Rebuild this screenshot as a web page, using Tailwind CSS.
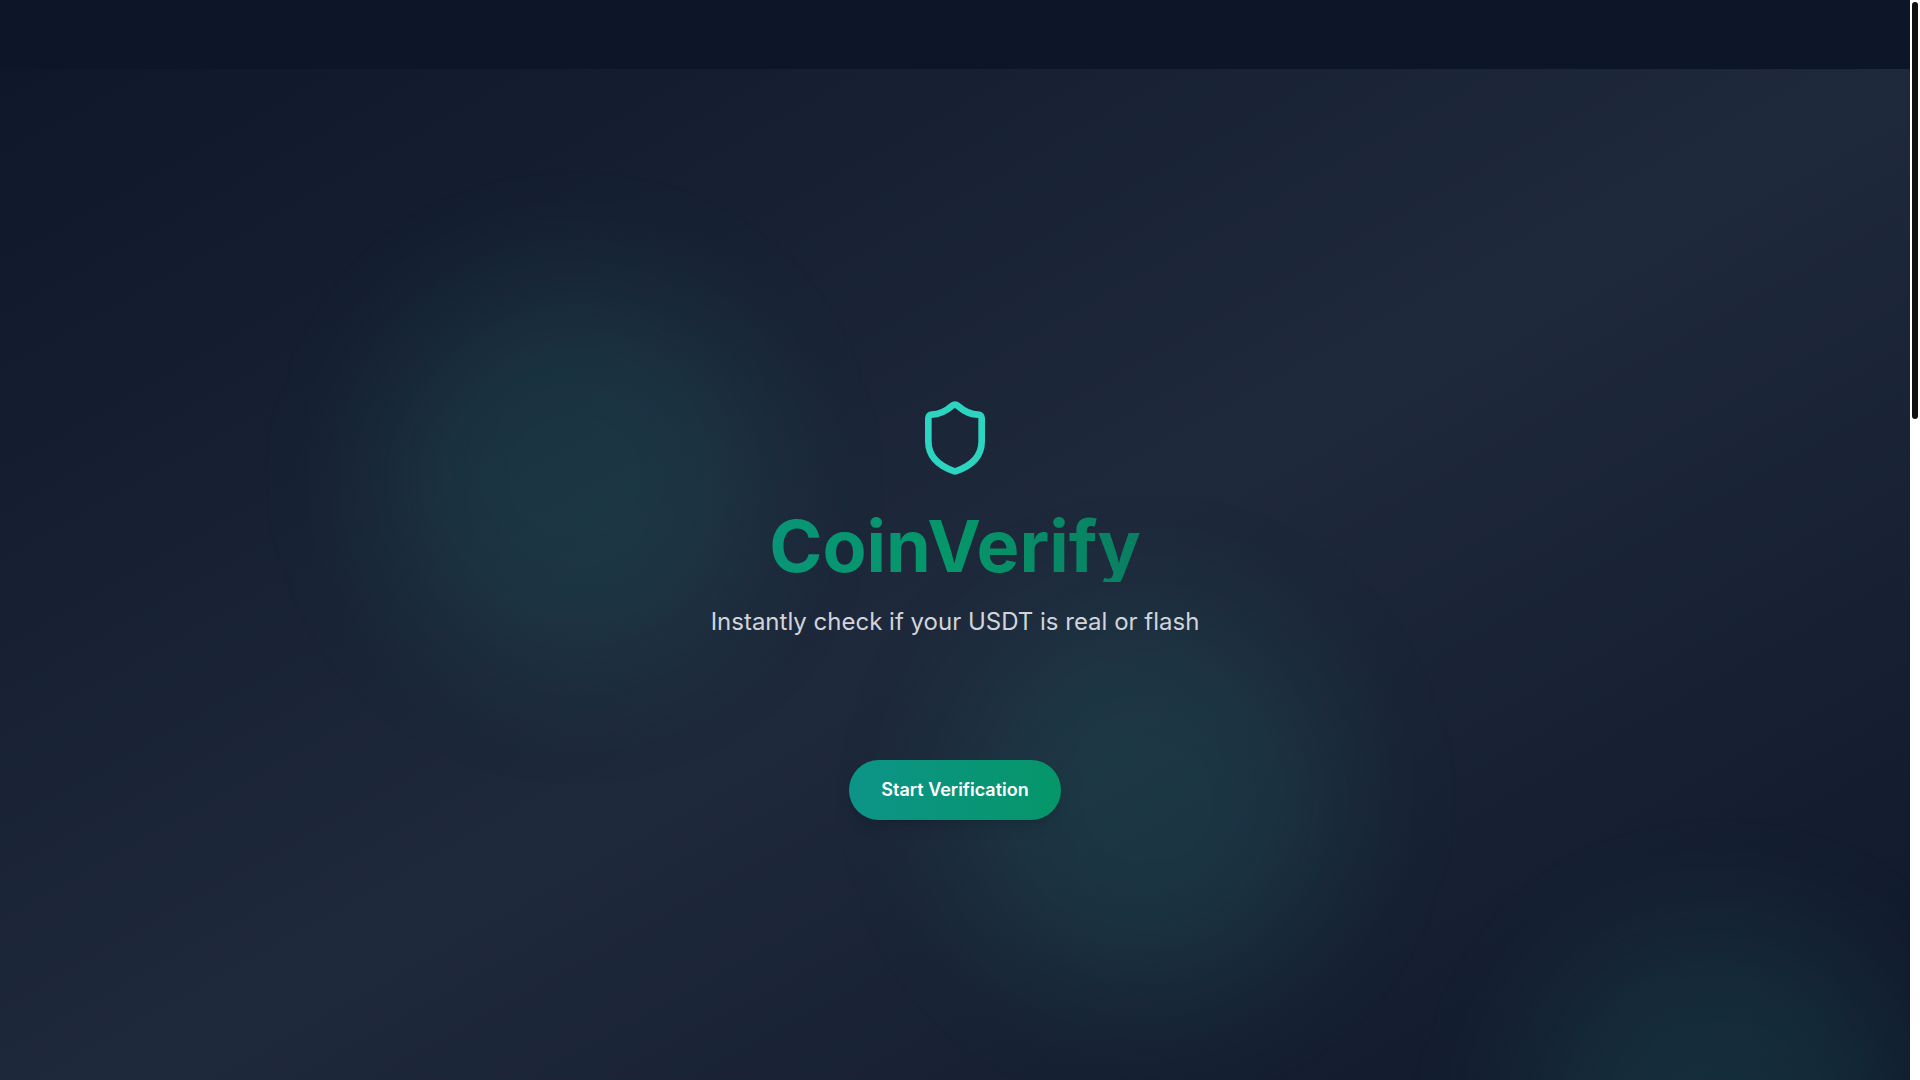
<!DOCTYPE html>
<html lang="en">
  <head>
    <meta charset="UTF-8" />
    <meta name="viewport" content="width=device-width, initial-scale=1.0" />
    <title>CoinVerify</title>
    <script src="https://cdn.jsdelivr.net/npm/@tailwindcss/browser@4"></script>
  </head>
  <body class="flex h-screen overflow-hidden bg-[#0f172a] font-['Inter',sans-serif] text-white">
    <div class="flex h-screen min-w-0 flex-1 flex-col overflow-hidden">
      <!-- Top bar -->
      <header class="h-[69px] shrink-0 bg-[#0d1628]"></header>

      <!-- Hero -->
      <main class="relative flex min-h-screen shrink-0 flex-col items-center justify-center overflow-hidden bg-linear-to-br/srgb from-[#0f172a] via-[#1e293b] to-[#0f172a]">
        <!-- Background glows -->
        <div class="absolute top-[20%] left-[20%] size-96 rounded-full bg-[#2dd4bf]/10 blur-3xl"></div>
        <div class="absolute top-[50%] left-[50%] size-96 rounded-full bg-[#2dd4bf]/10 blur-3xl"></div>
        <div class="absolute top-[80%] left-[80%] size-96 rounded-full bg-[#2dd4bf]/10 blur-3xl"></div>

        <section class="relative flex w-full max-w-4xl flex-col items-center px-4 text-center">
          <svg class="mb-8 size-20 text-[#2dd4bf]" viewBox="0 0 24 24" fill="none" stroke="currentColor" stroke-width="2" stroke-linecap="round" stroke-linejoin="round" aria-hidden="true">
            <path d="M20 13c0 5-3.5 7.5-7.66 8.95a1 1 0 0 1-.67-.01C7.5 20.5 4 18 4 13V6a1 1 0 0 1 1-1c2 0 4.5-1.2 6.24-2.72a1.17 1.17 0 0 1 1.52 0C14.51 3.81 17 5 19 5a1 1 0 0 1 1 1z" />
          </svg>
          <h1 class="mb-6 self-stretch bg-linear-to-r/srgb from-[#0d9488] via-[#059669] to-[#115e59] bg-clip-text text-7xl leading-none font-bold text-transparent">
            CoinVerify
          </h1>
          <p class="mb-[122px] text-2xl text-[#d1d5db]">
            Instantly check if your USDT is real or flash
          </p>
          <button type="button" class="rounded-full bg-linear-to-r/srgb from-[#0d9488] to-[#059669] px-8 py-4 text-lg font-semibold shadow-lg">
            Start Verification
          </button>
        </section>
      </main>
    </div>

    <!-- Scroll track -->
    <div class="h-screen w-[10px] shrink-0 bg-white p-[2px]">
      <div class="h-[417px] rounded-full bg-[#111111]"></div>
    </div>
  </body>
</html>
